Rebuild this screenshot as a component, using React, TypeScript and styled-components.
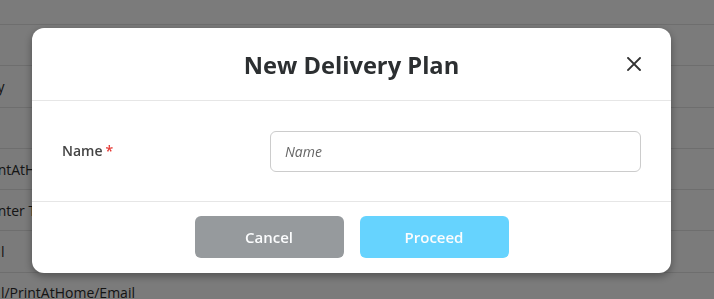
import React from "react";
import styled, { createGlobalStyle } from "styled-components";

const Global = createGlobalStyle`
  html, body { margin: 0; padding: 0; width: 714px; height: 299px; overflow: hidden; background: #f6f6f6; }
  body { font-family: "Open Sans", "Liberation Sans", sans-serif; }
  * { box-sizing: border-box; }
`;

const Page = styled.div`
  width: 714px;
  height: 299px;
  overflow: hidden;
  background: #f6f6f6;
`;

const Table = styled.div`
  display: flex;
  flex-direction: column;
  padding-top: 24px;
`;

const Row = styled.div`
  height: 41.3px;
  border-top: 1px solid #dcdcdc;
  display: flex;
  align-items: center;
  font-size: 14px;
  color: #2a2a2a;
  white-space: nowrap;
`;

const Cell = styled.span<{ $shift: number }>`
  margin-left: ${(p) => p.$shift}px;
`;

const Overlay = styled.div`
  position: fixed;
  inset: 0;
  background: rgba(0, 0, 0, 0.5);
  padding: 28px 0 0 32px;
`;

const Modal = styled.div`
  width: 639px;
  background: #fff;
  border-radius: 12px;
  box-shadow: 0 3px 8px rgba(0, 0, 0, 0.35);
  display: flex;
  flex-direction: column;
`;

const Header = styled.div`
  height: 73px;
  border-bottom: 1px solid #e6e6e6;
  display: grid;
  grid-template-columns: 60px 1fr 60px;
  align-items: center;
`;

const Title = styled.h2`
  margin: 0;
  grid-column: 2;
  text-align: center;
  font-size: 23.7px;
  font-weight: 700;
  color: #2c2f31;
  padding-top: 1px;
`;

const Close = styled.button`
  grid-column: 3;
  justify-self: start;
  margin-left: 15px;
  width: 16px;
  height: 16px;
  padding: 0;
  border: 0;
  background: none;
  display: flex;
  align-items: center;
  justify-content: center;
  cursor: pointer;
`;

const Body = styled.div`
  height: 101px;
  border-bottom: 1px solid #e6e6e6;
  display: grid;
  grid-template-columns: 208px 1fr;
  align-items: center;
  padding: 0 30px;
`;

const Label = styled.label`
  font-size: 14px;
  font-weight: 600;
  color: #444;
  display: flex;
  gap: 3px;
  padding-bottom: 1px;
`;

const Req = styled.span`
  color: #e53935;
`;

const Input = styled.input`
  height: 41px;
  width: 100%;
  border: 1px solid #cccccc;
  border-radius: 6px;
  padding: 0 14px;
  font-family: "Open Sans", "Liberation Sans", sans-serif;
  font-size: 14px;
  outline: none;
  &::placeholder {
    color: #666;
    font-style: italic;
  }
`;

const Footer = styled.div`
  height: 71px;
  display: flex;
  justify-content: center;
  align-items: flex-start;
  padding-top: 14px;
  gap: 16px;
`;

const Button = styled.button<{ $primary?: boolean }>`
  width: 149px;
  height: 42px;
  border: 0;
  border-radius: 6px;
  background: ${(p) => (p.$primary ? "#66d3fe" : "#969a9d")};
  color: #fbfcfd;
  font-family: "Open Sans", "Liberation Sans", sans-serif;
  font-size: 15px;
  font-weight: 600;
  cursor: pointer;
`;

const rows: { text: string; shift: number }[] = [
  { text: "", shift: 0 },
  { text: "Any", shift: -20 },
  { text: "", shift: 0 },
  { text: "PrintAtHome", shift: -20 },
  { text: "Printer Ticket", shift: -20 },
  { text: "Mail", shift: -23 },
  { text: "Mail/PrintAtHome/Email", shift: -23 },
];

export default function App() {
  return (
    <Page>
      <Global />
      <Table>
        {rows.map((r, i) => (
          <Row key={i}>
            <Cell $shift={r.shift}>{r.text}</Cell>
          </Row>
        ))}
      </Table>
      <Overlay>
        <Modal>
          <Header>
            <Title>New Delivery Plan</Title>
            <Close aria-label="Close">
              <svg width="14" height="14" viewBox="0 0 14 14">
                <path d="M1 1 L13 13 M13 1 L1 13" stroke="#333" strokeWidth="1.9" strokeLinecap="square" />
              </svg>
            </Close>
          </Header>
          <Body>
            <Label>
              Name <Req>*</Req>
            </Label>
            <Input placeholder="Name" />
          </Body>
          <Footer>
            <Button>Cancel</Button>
            <Button $primary>Proceed</Button>
          </Footer>
        </Modal>
      </Overlay>
    </Page>
  );
}
